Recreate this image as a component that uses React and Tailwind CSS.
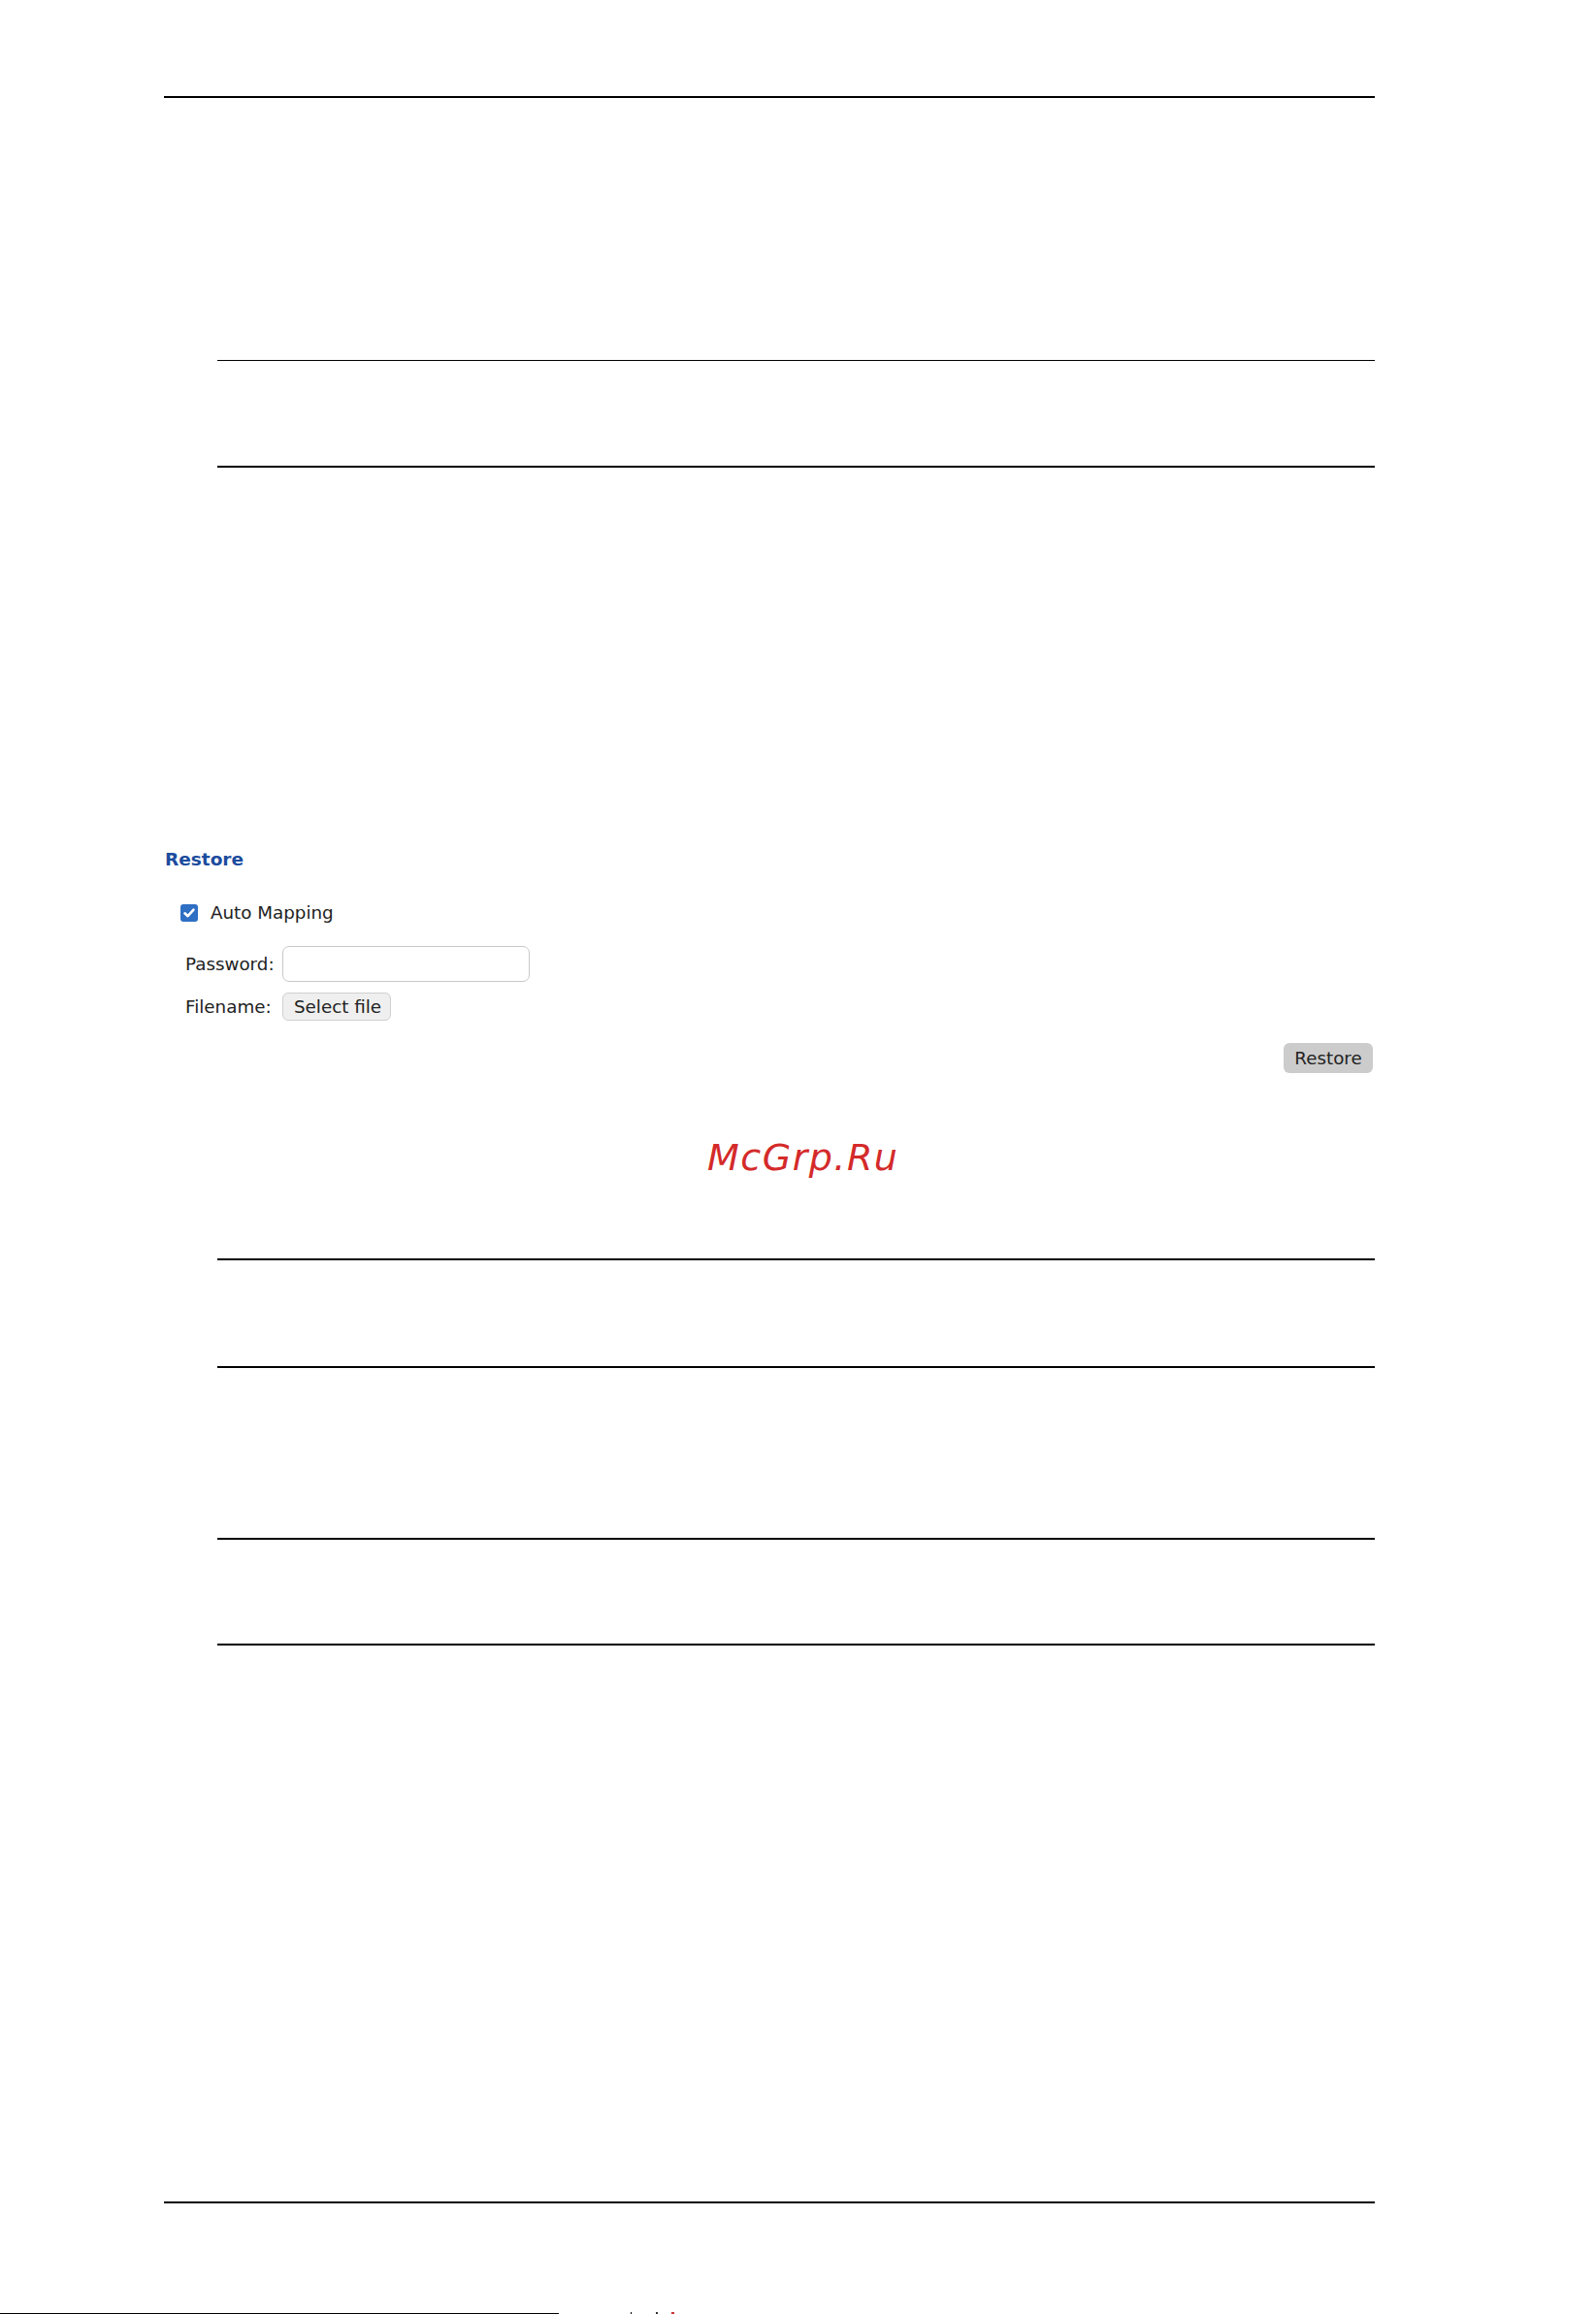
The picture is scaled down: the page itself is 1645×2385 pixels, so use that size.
import React from "react";

export default function App() {
  const font = { fontFamily: '"DejaVu Sans", Verdana, sans-serif' };
  return (
    <div className="relative w-[1645px] h-[2385px] overflow-hidden bg-white" style={font}>
      <div className="ml-[169px] w-[1248px] pt-[99px] flex flex-col">
        <div className="h-[2px] bg-black" />
        <div className="ml-[55px] mt-[270px] h-[1px] bg-black" />
        <div className="ml-[55px] mt-[108px] h-[2px] bg-black" />

        <div className="mt-[393px] ml-[1px] text-[18.5px] leading-[22px] font-bold text-[#1c4c9e]">Restore</div>

        <div className="mt-[33px] ml-[17px] h-[22px] flex items-center gap-[13px] text-[18.3px] leading-[22px] text-[#222]">
          <span className="w-[18px] h-[18px] rounded-[3px] bg-[#2f6fc4] flex items-center justify-center">
            <svg width="14" height="14" viewBox="0 0 14 14" fill="none">
              <path d="M2.5 7.3 L5.6 10.2 L11.5 3.6" stroke="white" strokeWidth="2.6" strokeLinecap="round" strokeLinejoin="round" />
            </svg>
          </span>
          <span>Auto Mapping</span>
        </div>

        <div className="mt-[23px] ml-[22px] flex items-center text-[18.3px] leading-[22px] text-[#222]">
          <span className="w-[100px]">Password:</span>
          <div className="w-[255px] h-[37px] border border-[#c8c8c8] rounded-[7px] bg-white" />
        </div>

        <div className="mt-[11px] ml-[22px] flex items-center text-[18.3px] leading-[22px] text-[#222]">
          <span className="w-[100px]">Filename:</span>
          <div className="w-[112px] h-[29px] border border-[#d0d0d0] rounded-[6px] bg-[#efefef] flex items-center pl-[11px]">
            Select file
          </div>
        </div>

        <div className="mt-[23px] flex justify-end pr-[2px]">
          <div className="w-[92px] h-[31px] rounded-[6px] bg-[#cccccc] flex items-center justify-center text-[18.3px] leading-[22px] text-[#222]">
            Restore
          </div>
        </div>

        <div className="mt-[64px] ml-[560px] text-[38px] leading-[46px] italic tracking-[1.5px] text-[#d42a2a]">
          McGrp.Ru
        </div>

        <div className="ml-[55px] mt-[81px] h-[2px] bg-black" />
        <div className="ml-[55px] mt-[109px] h-[2px] bg-black" />
        <div className="ml-[55px] mt-[175px] h-[2px] bg-black" />
        <div className="ml-[55px] mt-[107px] h-[2px] bg-black" />

        <div className="mt-[573px] h-[2px] bg-black" />
      </div>
      <div className="mt-[112px] flex items-end h-[2px]">
        <div className="w-[576px] h-[1px] bg-black" />
        <div className="ml-[74px] w-[1px] h-[2px] bg-black" />
        <div className="ml-[25px] w-[2px] h-[2px] bg-[#333]" />
        <div className="ml-[14px] w-[3px] h-[2px] bg-[#c33]" />
      </div>
    </div>
  );
}
